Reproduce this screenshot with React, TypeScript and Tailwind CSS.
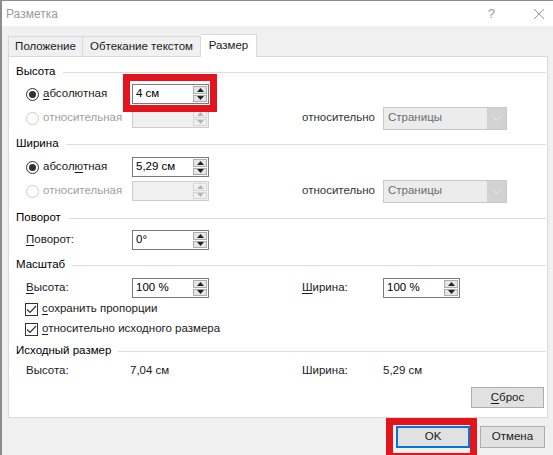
import React from "react";

const Up = () => (
  <svg width="7" height="4" viewBox="0 0 7 4"><polygon points="0,4 7,4 3.5,0" fill="#222" /></svg>
);
const Down = () => (
  <svg width="7" height="4" viewBox="0 0 7 4"><polygon points="0,0 7,0 3.5,4" fill="#222" /></svg>
);
const UpG = () => (
  <svg width="7" height="4" viewBox="0 0 7 4"><polygon points="0,4 7,4 3.5,0" fill="#b5b5b5" /></svg>
);
const DownG = () => (
  <svg width="7" height="4" viewBox="0 0 7 4"><polygon points="0,0 7,0 3.5,4" fill="#b5b5b5" /></svg>
);

function Spin({ value, disabled }: { value?: string; disabled?: boolean }) {
  return (
    <div
      className={`w-[77px] h-[20px] border flex items-stretch shrink-0 ${
        disabled ? "border-[#cccccc] bg-[#f0f0f0]" : "border-[#7a7a7a] bg-white"
      }`}
    >
      <span className="flex-1 pl-[3px] flex items-center text-black">{value}</span>
      <div className="w-[15px] flex flex-col gap-[1px] py-[1px] pr-[1px]">
        <div
          className={`flex-1 border flex items-center justify-center ${
            disabled ? "bg-[#f0f0f0] border-[#d6d6d6]" : "bg-[#e6e6e6] border-[#adadad]"
          }`}
        >
          {disabled ? <UpG /> : <Up />}
        </div>
        <div
          className={`flex-1 border flex items-center justify-center ${
            disabled ? "bg-[#f0f0f0] border-[#d6d6d6]" : "bg-[#e6e6e6] border-[#adadad]"
          }`}
        >
          {disabled ? <DownG /> : <Down />}
        </div>
      </div>
    </div>
  );
}

function Select() {
  return (
    <div className="w-[124px] h-[23px] border border-[#c8c8c8] bg-[#ececec] flex items-stretch">
      <span className="flex-1 pl-[4px] flex items-center text-[#6d6d6d]">Страницы</span>
      <div className="w-[19px] bg-[#d2d2d2] flex items-center justify-center">
        <svg width="9" height="5" viewBox="0 0 9 5">
          <polyline points="0.5,0.5 4.5,4.5 8.5,0.5" fill="none" stroke="#eeeeee" strokeWidth="1" />
        </svg>
      </div>
    </div>
  );
}

function Radio({ checked, disabled }: { checked?: boolean; disabled?: boolean }) {
  return (
    <div
      className={`w-[13px] h-[13px] rounded-full border flex items-center justify-center shrink-0 bg-white ${
        disabled ? "border-[#cccccc]" : "border-[#333333]"
      }`}
    >
      {checked && <div className="w-[7px] h-[7px] rounded-full bg-[#333333]" />}
    </div>
  );
}

function Check() {
  return (
    <div className="w-[13px] h-[13px] border border-[#333333] bg-white flex items-center justify-center shrink-0">
      <svg width="11" height="9" viewBox="0 0 11 9">
        <polyline points="1,4.5 4,7.5 10,1" fill="none" stroke="#333" strokeWidth="1.2" />
      </svg>
    </div>
  );
}

function Heading({ text }: { text: string }) {
  return (
    <div className="h-[16px] flex items-center pl-[7px] pr-[1px] gap-[7px]">
      <span className="text-black whitespace-nowrap">{text}</span>
      <div className="flex-1 h-px bg-[#dcdcdc]" />
    </div>
  );
}

function U({ c }: { c: string }) {
  return <span className="underline underline-offset-2">{c}</span>;
}

export default function App() {
  return (
    <div className="w-[553px] h-[455px] overflow-hidden bg-[#f0f0f0] border-l-2 border-t border-[#8c8c8c] flex flex-col font-['Liberation_Sans',Arial,sans-serif] text-[11.5px] text-[#1a1a1a] relative">
      {/* Title bar */}
      <div className="h-[25px] bg-white flex items-center pl-[4px] pr-[8px] shrink-0">
        <span className="text-[12px] text-[#9a9a9a] flex-1">Разметка</span>
        <span className="text-[13px] text-[#9a9a9a] mr-[38px]">?</span>
        <svg width="12" height="12" viewBox="0 0 12 12">
          <path d="M1 1 L11 11 M11 1 L1 11" stroke="#9a9a9a" strokeWidth="1" />
        </svg>
      </div>

      {/* Tabs */}
      <div className="pl-[6px] pt-[7px] flex items-end h-[30px] shrink-0">
        <div className="h-[20px] w-[75px] border border-b-0 border-[#d9d9d9] bg-[#f0f0f0] flex items-center justify-center">
          Положение
        </div>
        <div className="h-[20px] w-[118px] border border-l-0 border-b-0 border-[#d9d9d9] bg-[#f0f0f0] flex items-center justify-center">
          Обтекание текстом
        </div>
        <div className="h-[23px] w-[56px] border border-l-0 border-b-0 border-[#d9d9d9] bg-white flex items-center justify-center -mb-px relative z-10">
          Размер
        </div>
      </div>

      {/* Panel */}
      <div className="ml-[6px] w-[540px] h-[362px] border border-[#d9d9d9] bg-white flex flex-col pt-[7px] shrink-0">
        <Heading text="Высота" />
        <div className="mt-[4px] h-[20px] flex items-center pl-[17px]">
          <div className="w-[106px] flex items-center gap-[4px]">
            <Radio checked />
            <span><U c="а" />бсолютная</span>
          </div>
          <div className="relative">
            <Spin value="4 см" />
            <div className="absolute -left-[9px] -top-[10px] -right-[8px] -bottom-[8px] border-[7px] border-[#e3141c] pointer-events-none" />
          </div>
        </div>
        <div className="mt-[4px] h-[20px] flex items-center pl-[17px]">
          <div className="w-[106px] flex items-center gap-[4px]">
            <Radio disabled />
            <span className="text-[#a0a0a0]">относительная</span>
          </div>
          <Spin disabled />
          <span className="ml-[93px] w-[81px] text-[#333]">относительно</span>
          <Select />
        </div>

        <div className="mt-[8px]"><Heading text="Ширина" /></div>
        <div className="mt-[5px] h-[20px] flex items-center pl-[17px]">
          <div className="w-[106px] flex items-center gap-[4px]">
            <Radio checked />
            <span>абсол<U c="ю" />тная</span>
          </div>
          <Spin value="5,29 см" />
        </div>
        <div className="mt-[4px] h-[20px] flex items-center pl-[17px]">
          <div className="w-[106px] flex items-center gap-[4px]">
            <Radio disabled />
            <span className="text-[#a0a0a0]">относительная</span>
          </div>
          <Spin disabled />
          <span className="ml-[93px] w-[81px] text-[#333]">относительно</span>
          <Select />
        </div>

        <div className="mt-[9px]"><Heading text="Поворот" /></div>
        <div className="mt-[4px] h-[20px] flex items-center pl-[17px]">
          <span className="w-[106px]"><U c="П" />оворот:</span>
          <Spin value="0°" />
        </div>

        <div className="mt-[7px]"><Heading text="Масштаб" /></div>
        <div className="mt-[5px] h-[20px] flex items-center pl-[17px]">
          <span className="w-[106px]"><U c="В" />ысота:</span>
          <Spin value="100 %" />
          <span className="ml-[93px] w-[81px]"><U c="Ш" />ирина:</span>
          <Spin value="100 %" />
        </div>
        <div className="mt-[2px] h-[18px] flex items-center pl-[16px] gap-[4px]">
          <Check />
          <span><U c="с" />охранить пропорции</span>
        </div>
        <div className="mt-[2px] h-[18px] flex items-center pl-[16px] gap-[4px]">
          <Check />
          <span><U c="о" />тносительно исходного размера</span>
        </div>

        <div className="mt-[5px]"><Heading text="Исходный размер" /></div>
        <div className="mt-[2px] h-[20px] flex items-center pl-[17px]">
          <span className="w-[104px]">Высота:</span>
          <span className="w-[172px]">7,04 см</span>
          <span className="w-[81px]">Ширина:</span>
          <span>5,29 см</span>
        </div>
        <div className="mt-[6px] flex justify-end pr-[3px]">
          <div className="w-[73px] h-[21px] bg-[#e1e1e1] border border-[#adadad] flex items-center justify-center">
            <span><U c="С" />брос</span>
          </div>
        </div>
      </div>

      {/* Footer */}
      <div className="mt-[8px] flex justify-end gap-[10px] pr-[8px]">
        <div className="relative">
          <div className="w-[74px] h-[22px] bg-[#e1e1e1] border border-[#0078d7] shadow-[inset_0_0_0_1px_#0078d7] flex items-center justify-center">
            OK
          </div>
          <div className="absolute -left-[10px] -top-[8px] -right-[7px] -bottom-[12px] border-[7px] border-[#e3141c] pointer-events-none" />
        </div>
        <div className="w-[65px] h-[22px] bg-[#e1e1e1] border border-[#adadad] flex items-center justify-center">
          Отмена
        </div>
      </div>
    </div>
  );
}
